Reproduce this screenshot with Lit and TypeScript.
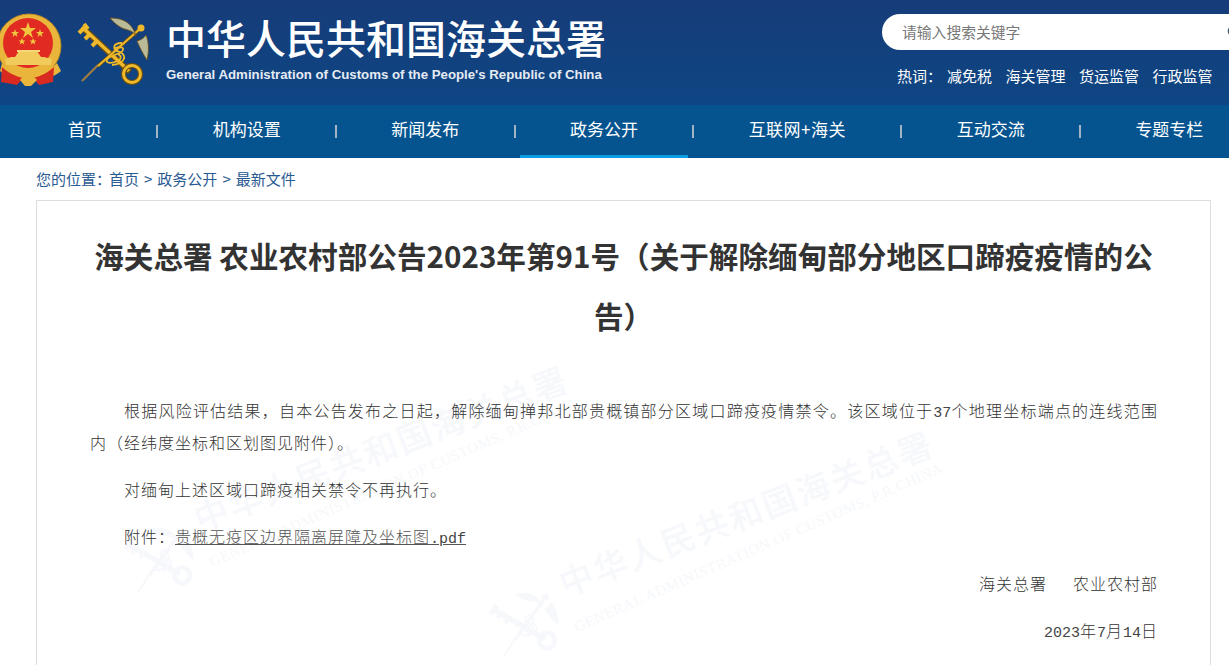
import { LitElement, html, css, svg } from "lit";
import { customElement } from "lit/decorators.js";

const emblem = svg`<svg class="emblem" width="66" height="88" viewBox="0 0 66 88">
  <circle cx="30" cy="47" r="32" fill="#e9b53a"/>
  <circle cx="30" cy="47" r="32" fill="none" stroke="#b98a24" stroke-width="1"/>
  <circle cx="29" cy="44" r="25" fill="#e02a22"/>
  <polygon points="29,23 31,29 37,29 32,33 34,39 29,35 24,39 26,33 21,29 27,29" fill="#f3c63f"/>
  <polygon points="16,30 17,33 20,33 17.6,35 18.5,38 16,36 13.5,38 14.4,35 12,33 15,33" fill="#f3c63f"/>
  <polygon points="41,30 42,33 45,33 42.6,35 43.5,38 41,36 38.5,38 39.4,35 37,33 40,33" fill="#f3c63f"/>
  <polygon points="23,39 24,41.5 26.5,41.5 24.5,43 25.3,45.5 23,44 20.7,45.5 21.5,43 19.5,41.5 22,41.5" fill="#f3c63f"/>
  <polygon points="34,39 35,41.5 37.5,41.5 35.5,43 36.3,45.5 34,44 31.7,45.5 32.5,43 30.5,41.5 33,41.5" fill="#f3c63f"/>
  <path d="M6 60 L7 66 H52 L53 60 L45 58 H42 L38 52 H20 L16 58 H12 Z" fill="#f1cb5c"/>
  <path d="M18 53 H41 V51 H18 Z" fill="#f5d778"/>
  <path d="M3 64 C12 77 48 77 58 64 L62 72 C50 84 12 84 1 72 Z" fill="#e9b53a"/>
  <path d="M3 68 L2 83 L18 86 L24 79 C16 77 8 73 3 68 Z" fill="#d92a22"/>
  <path d="M55 68 L54 83 L40 86 L34 79 C42 77 50 73 55 68 Z" fill="#d92a22"/>
  <path d="M21 81 C26 74 32 74 38 81 L32 87 H26 Z" fill="#e9b53a"/>
</svg>`;

const keyLogo = (gold: string, dark: string, wing: string, pin: string) => svg`
  <path d="M82 81 L98 65" stroke="${pin}" stroke-width="2" fill="none"/>
  <path d="M83 28 L130 72" stroke="${dark}" stroke-width="6" fill="none"/>
  <path d="M82 27 L129 71" stroke="${gold}" stroke-width="3.5" fill="none"/>
  <path d="M79 33 L84 28 M85 39 L90 34 M92 46 L97 41 M84 24 L88 29" stroke="${gold}" stroke-width="4" fill="none"/>
  <circle cx="132" cy="74" r="8.5" fill="none" stroke="${dark}" stroke-width="5"/>
  <circle cx="132" cy="74" r="8.5" fill="none" stroke="${gold}" stroke-width="3"/>
  <path d="M142 27 L98 66" stroke="${dark}" stroke-width="3.5" fill="none"/>
  <path d="M142 27 L98 66" stroke="${gold}" stroke-width="2" fill="none"/>
  <path d="M110 18 C122 18 132 22 136 36 C133 30 126 30 122 28 C118 26 113 22 110 18 Z" fill="${wing}" stroke="${dark}" stroke-width=".8"/>
  <path d="M146 35 C149 42 149 52 147 60 C143 54 139 46 137 41 C141 40 144 38 146 35 Z" fill="${wing}" stroke="${dark}" stroke-width=".8"/>
  <circle cx="141" cy="28" r="3.5" fill="${gold}"/>
  <path d="M115 48 C126 45 126 52 114 55 C104 59 104 65 115 62 C122 60 122 56 118 54" stroke="${gold}" stroke-width="1.8" fill="none"/>
  <path d="M122 43 C112 43 112 50 120 52 C128 56 124 64 112 65" stroke="${gold}" stroke-width="1.8" fill="none"/>
`;

const wmOne = (dx: number, dy: number) => svg`<g transform="translate(${dx} ${dy})">
  <g transform="translate(565 597) rotate(-21)">
    <text class="wm-cn" x="0" y="0" font-size="34" textLength="396">中华人民共和国海关总署</text>
  </g>
  <g transform="translate(577 632) rotate(-23.6)">
    <text class="wm-en" x="0" y="0" font-size="15" textLength="400">GENERAL ADMINISTRATION OF CUSTOMS, P.R.CHINA</text>
  </g>
  <g transform="translate(412 601) rotate(-13) scale(.93)">${keyLogo("#f6f8fb", "#f6f8fb", "#f6f8fb", "#f6f8fb")}</g>
</g>`;

@customElement("app-root")
export class AppRoot extends LitElement {
  static styles = css`
    :host { display: block; width: 1229px; height: 665px; overflow: hidden; background: #fff; font-family: "Noto Sans CJK SC", sans-serif; }
    .head { height: 105px; background: linear-gradient(#163c79, #0e4684); display: flex; box-sizing: border-box; position: relative; }
    .logos { display: flex; width: 882px; flex: none; }
    .emblem { flex: none; margin-left: -1px; margin-top: -1px; }
    .key { flex: none; margin-left: -65px; }
    .names { padding-top: 12px; margin-left: 16px; color: #fff; }
    .cn { font-size: 40px; line-height: 50px; font-weight: 500; white-space: nowrap; }
    .en { font: 700 13.24px/18px "Liberation Sans", sans-serif; white-space: nowrap; margin-top: 4px; color: #e6ebf3; }
    .tools { flex: 1; min-width: 0; padding-top: 14px; }
    .search { height: 36px; background: #fff; border-radius: 18px 0 0 18px; display: flex; align-items: center; justify-content: space-between; padding-left: 20px; font-size: 14.8px; color: #777; overflow: hidden; }
    .search span { margin-top: -2px; }
    .search svg { flex: none; margin-right: -12px; }
    .hot { display: flex; margin-top: 16px; padding-left: 15px; font-size: 15px; line-height: 20px; color: #fff; }
    .hot .lbl { width: 50px; }
    .hot a { margin-right: 13.5px; color: #fff; }
    nav { height: 53px; background: #06548f; display: flex; padding-left: 18px; color: #fff; font-size: 17px; }
    nav a { position: relative; padding: 0 50px; line-height: 48px; white-space: nowrap; }
    nav a.wide { letter-spacing: .5px; }
    nav a.on::after { content: ""; position: absolute; left: 0; right: 0; bottom: 0; height: 3px; background: #0b9ce2; }
    nav i { width: 10.67px; flex: none; display: flex; justify-content: center; padding-top: 20px; box-sizing: border-box; }
    nav i::before { content: ""; width: 2px; height: 13px; background: #a3b4c6; }
    .crumb { height: 42px; padding-left: 36px; font-size: 15px; line-height: 42px; color: #2a5a92; }
    .crumb b { font-weight: 400; margin-right: -2px; }
    .crumb span { margin: 0 5px; }
    .card { margin: 0 18px 0 36px; border: 1px solid #ddd; border-bottom: 0; padding: 25px 53px 0; height: 600px; box-sizing: border-box; position: relative; overflow: hidden; }
    h1 { margin: 0; font-size: 29.6px; line-height: 60px; font-weight: 700; color: #333; text-align: center; position: relative; }
    .body { position: relative; margin: 48px -1px 0 0; font-size: 16px; letter-spacing: 1px; color: #333; font-weight: 300; }
    .body p { margin: 0; line-height: 32px; padding-bottom: 15px; text-align: justify; }
    .body p.ind { text-indent: 34px; }
    .body a { color: #555; text-decoration: underline; }
    .body p.r { text-align: right; }
    .m { font-family: "Liberation Mono", monospace; font-size: 15px; letter-spacing: 0; line-height: 0; color: #444; }
    .gap { display: inline-block; width: 26px; }
    .wm { position: absolute; left: -37px; top: -201px; pointer-events: none; }
    .wm-cn { fill: #f6f8fb; font-weight: 500; }
    .wm-en { fill: #f6f8fb; font-family: "Liberation Serif", serif; }
  `;

  render() {
    const nav = ["首页", "机构设置", "新闻发布", "政务公开", "互联网+海关", "互动交流", "专题专栏"];
    return html`
      <div class="head">
        <div class="logos">
          ${emblem}
          <svg class="key" width="150" height="100" viewBox="0 0 150 100">${keyLogo("#eeb92b", "#6d4d10", "#b9bb98", "#a6803e")}</svg>
          <div class="names">
            <div class="cn">中华人民共和国海关总署</div>
            <div class="en">General Administration of Customs of the People's Republic of China</div>
          </div>
        </div>
        <div class="tools">
          <div class="search"><span>请输入搜索关键字</span>
            <svg width="14" height="14" viewBox="0 0 14 14"><circle cx="6" cy="6" r="4.6" fill="none" stroke="#4a5a70" stroke-width="1.5"/><path d="M9.5 9.5 L13 13" stroke="#4a5a70" stroke-width="1.5"/></svg>
          </div>
          <div class="hot"><span class="lbl">热词：</span><a>减免税</a><a>海关管理</a><a>货运监管</a><a>行政监管</a></div>
        </div>
      </div>
      <nav>
        ${nav.map((n, i) => html`${i ? html`<i></i>` : ""}<a class=${n === "政务公开" ? "on" : n.includes("+") ? "wide" : ""}>${n}</a>`)}
      </nav>
      <div class="crumb"><b>您的位置：</b>首页<span>&gt;</span>政务公开<span>&gt;</span>最新文件</div>
      <div class="card">
        <svg class="wm" width="1229" height="800" viewBox="0 0 1229 800">
          ${wmOne(-365, -65)}${wmOne(0, 0)}
        </svg>
        <h1>海关总署 农业农村部公告2023年第91号（关于解除缅甸部分地区口蹄疫疫情的公告）</h1>
        <div class="body">
          <p class="ind">根据风险评估结果，自本公告发布之日起，解除缅甸掸邦北部贵概镇部分区域口蹄疫疫情禁令。该区域位于<span class="m">37</span>个地理坐标端点的连线范围内（经纬度坐标和区划图见附件）。</p>
          <p class="ind">对缅甸上述区域口蹄疫相关禁令不再执行。</p>
          <p class="ind">附件：<a>贵概无疫区边界隔离屏障及坐标图<span class="m">.pdf</span></a></p>
          <p class="r">海关总署<span class="gap"></span>农业农村部</p>
          <p class="r"><span class="m">2023</span>年<span class="m">7</span>月<span class="m">14</span>日</p>
        </div>
      </div>
    `;
  }
}
